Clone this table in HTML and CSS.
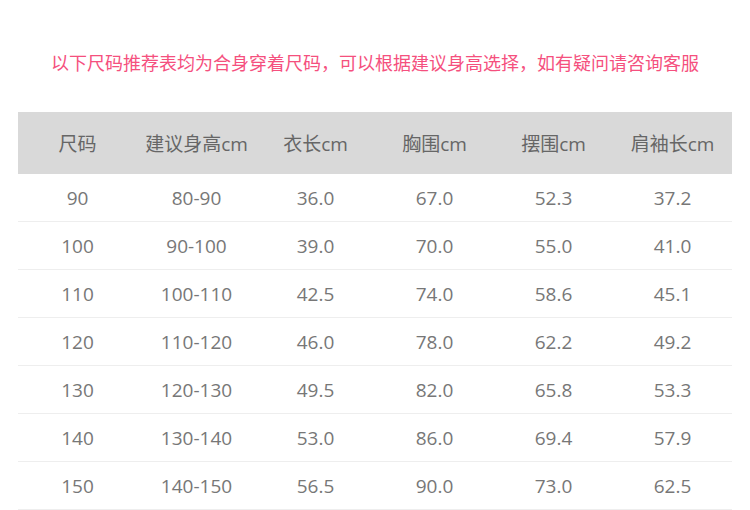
FILE: index.html
```html
<!DOCTYPE html>
<html lang="zh-CN">
<head>
<meta charset="utf-8">
<link rel="stylesheet" href="styles.css">
</head>
<body>
<div class="page">
  <p class="notice">以下尺码推荐表均为合身穿着尺码，可以根据建议身高选择，如有疑问请咨询客服</p>
  <table class="size-table">
    <thead>
      <tr><th>尺码</th><th>建议身高cm</th><th>衣长cm</th><th>胸围cm</th><th>摆围cm</th><th>肩袖长cm</th></tr>
    </thead>
    <tbody>
      <tr><td>90</td><td>80-90</td><td>36.0</td><td>67.0</td><td>52.3</td><td>37.2</td></tr>
      <tr><td>100</td><td>90-100</td><td>39.0</td><td>70.0</td><td>55.0</td><td>41.0</td></tr>
      <tr><td>110</td><td>100-110</td><td>42.5</td><td>74.0</td><td>58.6</td><td>45.1</td></tr>
      <tr><td>120</td><td>110-120</td><td>46.0</td><td>78.0</td><td>62.2</td><td>49.2</td></tr>
      <tr><td>130</td><td>120-130</td><td>49.5</td><td>82.0</td><td>65.8</td><td>53.3</td></tr>
      <tr><td>140</td><td>130-140</td><td>53.0</td><td>86.0</td><td>69.4</td><td>57.9</td></tr>
      <tr><td>150</td><td>140-150</td><td>56.5</td><td>90.0</td><td>73.0</td><td>62.5</td></tr>
    </tbody>
  </table>
</div>
</body>
</html>
```
FILE: styles.css
```css
html, body {
  margin: 0;
  padding: 0;
  background: #fff;
}
body {
  font-family: "Open Sans", "Noto Sans CJK SC", sans-serif;
  color: #666;
}
.page {
  padding: 0 18px;
}
.notice {
  margin: 0;
  padding-top: 50px;
  height: 62px;
  box-sizing: border-box;
  line-height: 26px;
  text-align: center;
  font-size: 18px;
  letter-spacing: 0;
  color: #f5507e;
}
.size-table {
  margin-top: 50px;
  width: 714px;
  border-collapse: collapse;
  table-layout: fixed;
}
.size-table th {
  height: 62px;
  background: #d9d9d9;
  font-weight: normal;
  font-size: 19px;
  color: #666;
  text-align: center;
  padding: 0;
}
.size-table td {
  height: 47px;
  border-bottom: 1px solid #eeeeee;
  text-align: center;
  font-size: 19px;
  color: #777;
  padding: 0;
}
```
